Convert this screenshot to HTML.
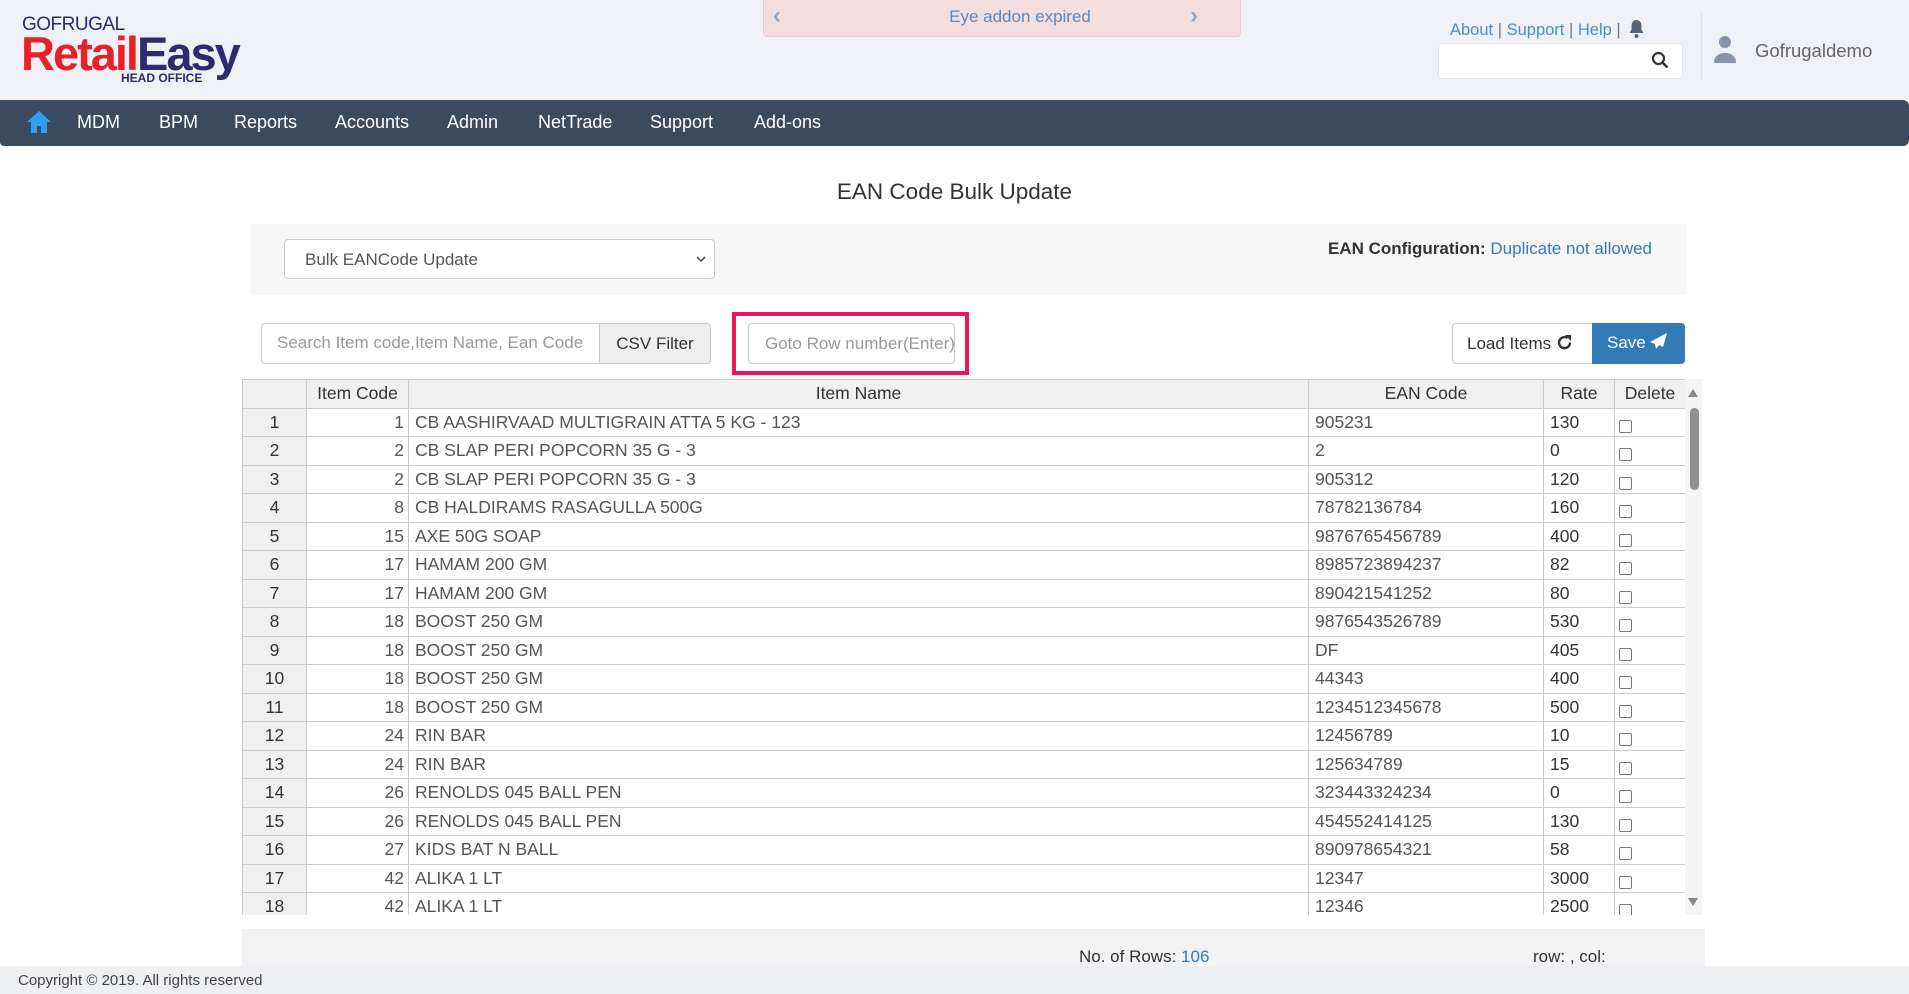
<!DOCTYPE html>
<html><head><meta charset="utf-8"><style>
*{box-sizing:border-box;margin:0;padding:0}
body{width:1909px;height:994px;position:relative;overflow:hidden;background:#fff;font-family:"Liberation Sans",Arial,sans-serif;color:#333}
.a{position:absolute}
#hdr{left:0;top:0;width:1909px;height:100px;background:#f0f1f6}
#nav{left:0;top:100px;width:1909px;height:46px;background:#3b4a5f;border-radius:0 6px 6px 4px}
#nav span{position:absolute;top:12px;color:#fff;font-size:18px;font-family:"Liberation Sans",sans-serif}
table{border-collapse:collapse;table-layout:fixed;font-size:17.5px}
td,th{border:1px solid #ccc;height:28.5px;padding:0 6px;white-space:nowrap;overflow:hidden;color:#555;font-weight:normal}
th{background:#f0f0f0;color:#333;text-align:center}
td.n{background:#f0f0f0;color:#333;text-align:center}
td.r{text-align:right;padding-right:4px;color:#555}
td.cb{padding-left:4px}
.chk{display:inline-block;width:13px;height:13px;border:1px solid #777;border-radius:2px;background:#fff;vertical-align:middle;margin-top:6px}
</style></head><body>
<div id="hdr" class="a"></div>
<div class="a" style="left:22px;top:14px;font-size:19px;color:#2d2a6e;letter-spacing:-0.5px">GOFRUGAL</div>
<div class="a" style="left:21px;top:28px;font-size:47px;font-weight:bold;letter-spacing:-2px;line-height:52px"><span style="color:#e8202a">Retail</span><span style="color:#2d2a6e">Easy</span></div>
<div class="a" style="left:121px;top:71px;font-size:12px;font-weight:bold;color:#2d2a6e">HEAD OFFICE</div>
<div class="a" style="left:763px;top:0;width:478px;height:37px;background:#f2dede;border:1px solid #ebccd1;border-top:0;border-radius:0 0 4px 4px"></div>
<div class="a" style="left:773px;top:2px;font-size:24px;font-weight:bold;color:#8aa6cc">‹</div>
<div class="a" style="left:1190px;top:2px;font-size:24px;font-weight:bold;color:#8aa6cc">›</div>
<div class="a" style="left:763px;top:7px;width:514px;text-align:center;font-size:17px;color:#5a8ac0">Eye addon expired</div>
<div class="a" style="left:1450px;top:21px;font-size:16.5px;color:#4a8ed0;white-space:nowrap">About <span style="color:#777">|</span> Support <span style="color:#777">|</span> Help <span style="color:#777">|</span></div>
<svg class="a" style="left:1628px;top:19px" width="17" height="20" viewBox="0 0 17 20"><path d="M8.5 1c-3 0-5 2.5-5 5.5v4L1.5 14h14l-2-3.5v-4c0-3-2-5.5-5-5.5z" fill="#5a6478"/><circle cx="8.5" cy="17" r="2" fill="#5a6478"/></svg>
<div class="a" style="left:1438px;top:43px;width:245px;height:36px;background:#fff;border:1px solid #e3e5ea;border-radius:4px"></div>
<svg class="a" style="left:1651px;top:51px" width="18" height="19" viewBox="0 0 18 19"><circle cx="7.5" cy="7.5" r="5.5" fill="none" stroke="#333" stroke-width="2.2"/><path d="M11.5 11.5l5 5" stroke="#333" stroke-width="2.6"/></svg>
<div class="a" style="left:1701px;top:12px;width:1px;height:68px;background:#dfe1e6"></div>
<svg class="a" style="left:1713px;top:35px" width="24" height="29" viewBox="0 0 24 29"><circle cx="12" cy="7" r="6" fill="#8a93a8"/><path d="M1 28c0-7 5-10 11-10s11 3 11 10z" fill="#8a93a8"/></svg>
<div class="a" style="left:1755px;top:40px;font-size:18.5px;color:#666">Gofrugaldemo</div>
<div id="nav" class="a">
<svg style="position:absolute;left:26px;top:10px" width="26" height="24" viewBox="0 0 26 24"><path d="M13 1L1 12h4v11h6v-7h4v7h6V12h4z" fill="#2f9fee"/></svg>
<span style="left:77px">MDM</span><span style="left:159px">BPM</span><span style="left:234px">Reports</span><span style="left:335px">Accounts</span><span style="left:447px">Admin</span><span style="left:538px">NetTrade</span><span style="left:650px">Support</span><span style="left:754px">Add-ons</span>
</div>
<div class="a" style="left:0;top:179px;width:1909px;text-align:center;font-size:22.5px;color:#333">EAN Code Bulk Update</div>
<div class="a" style="left:251px;top:224px;width:1435px;height:71px;background:#f7f7f7"></div>
<div class="a" style="left:284px;top:239px;width:431px;height:40px;background:#fff;border:1px solid #ccc;border-radius:4px;font-size:17px;color:#555;padding:10px 20px">Bulk EANCode Update<svg style="position:absolute;right:8px;top:16px" width="10" height="7" viewBox="0 0 10 7"><path d="M1 1l4 4 4-4" fill="none" stroke="#444" stroke-width="1.5"/></svg></div>
<div class="a" style="right:257px;top:239px;font-size:17px;color:#333"><b>EAN Configuration:</b> <span style="color:#337ab7">Duplicate not allowed</span></div>
<div class="a" style="left:261px;top:323px;width:450px;height:41px;border:1px solid #ccc;border-radius:4px;background:#fff"></div>
<div class="a" style="left:277px;top:333px;font-size:17px;color:#999;width:310px;overflow:hidden;white-space:nowrap">Search Item code,Item Name, Ean Code</div>
<div class="a" style="left:599px;top:323px;width:112px;height:41px;border:1px solid #ccc;border-radius:0 4px 4px 0;background:#eee;font-size:17px;color:#333;text-align:center;padding-top:10px">CSV Filter</div>
<div class="a" style="left:732px;top:312px;width:237px;height:63px;border:4px solid #ec1558"></div>
<div class="a" style="left:748px;top:323px;width:207px;height:41px;border:1px solid #ccc;border-radius:4px;background:#fff;font-size:17px;color:#999;padding:10px 16px;white-space:nowrap;overflow:hidden">Goto Row number(Enter)</div>
<div class="a" style="left:1452px;top:323px;width:141px;height:41px;border:1px solid #ccc;border-radius:4px 0 0 4px;background:#fff;font-size:17px;color:#333;padding:10px 14px;white-space:nowrap">Load Items <svg width="17" height="17" viewBox="0 0 17 17" style="vertical-align:-2px"><path d="M14 8.5A5.5 5.5 0 1 1 11.5 4" fill="none" stroke="#333" stroke-width="2.4"/><path d="M9 1h6v6z" fill="#333"/></svg></div>
<div class="a" style="left:1592px;top:323px;width:93px;height:41px;border-radius:0 4px 4px 0;background:#337ab7;font-size:17px;color:#fff;padding:10px 15px;white-space:nowrap">Save <svg width="18" height="16" viewBox="0 0 18 16" style="vertical-align:-1px"><path d="M17 0L0 9l5 2 1 5 3-4 4 2z" fill="#fff"/></svg></div>
<div class="a" style="left:242px;top:379px;width:1443px;height:536px;overflow:hidden">
<table style="width:1443px">
<colgroup><col style="width:64px"><col style="width:102px"><col style="width:900px"><col style="width:235px"><col style="width:71px"><col style="width:71px"></colgroup>
<tr><th></th><th>Item Code</th><th>Item Name</th><th>EAN Code</th><th>Rate</th><th>Delete</th></tr>
<tr><td class="n">1</td><td class="r">1</td><td>CB AASHIRVAAD MULTIGRAIN ATTA 5 KG - 123</td><td>905231</td><td style="color:#333">130</td><td class="cb"><span class="chk"></span></td></tr>
<tr><td class="n">2</td><td class="r">2</td><td>CB SLAP PERI POPCORN 35 G - 3</td><td>2</td><td style="color:#333">0</td><td class="cb"><span class="chk"></span></td></tr>
<tr><td class="n">3</td><td class="r">2</td><td>CB SLAP PERI POPCORN 35 G - 3</td><td>905312</td><td style="color:#333">120</td><td class="cb"><span class="chk"></span></td></tr>
<tr><td class="n">4</td><td class="r">8</td><td>CB HALDIRAMS RASAGULLA 500G</td><td>78782136784</td><td style="color:#333">160</td><td class="cb"><span class="chk"></span></td></tr>
<tr><td class="n">5</td><td class="r">15</td><td>AXE 50G SOAP</td><td>9876765456789</td><td style="color:#333">400</td><td class="cb"><span class="chk"></span></td></tr>
<tr><td class="n">6</td><td class="r">17</td><td>HAMAM 200 GM</td><td>8985723894237</td><td style="color:#333">82</td><td class="cb"><span class="chk"></span></td></tr>
<tr><td class="n">7</td><td class="r">17</td><td>HAMAM 200 GM</td><td>890421541252</td><td style="color:#333">80</td><td class="cb"><span class="chk"></span></td></tr>
<tr><td class="n">8</td><td class="r">18</td><td>BOOST 250 GM</td><td>9876543526789</td><td style="color:#333">530</td><td class="cb"><span class="chk"></span></td></tr>
<tr><td class="n">9</td><td class="r">18</td><td>BOOST 250 GM</td><td>DF</td><td style="color:#333">405</td><td class="cb"><span class="chk"></span></td></tr>
<tr><td class="n">10</td><td class="r">18</td><td>BOOST 250 GM</td><td>44343</td><td style="color:#333">400</td><td class="cb"><span class="chk"></span></td></tr>
<tr><td class="n">11</td><td class="r">18</td><td>BOOST 250 GM</td><td>1234512345678</td><td style="color:#333">500</td><td class="cb"><span class="chk"></span></td></tr>
<tr><td class="n">12</td><td class="r">24</td><td>RIN BAR</td><td>12456789</td><td style="color:#333">10</td><td class="cb"><span class="chk"></span></td></tr>
<tr><td class="n">13</td><td class="r">24</td><td>RIN BAR</td><td>125634789</td><td style="color:#333">15</td><td class="cb"><span class="chk"></span></td></tr>
<tr><td class="n">14</td><td class="r">26</td><td>RENOLDS 045 BALL PEN</td><td>323443324234</td><td style="color:#333">0</td><td class="cb"><span class="chk"></span></td></tr>
<tr><td class="n">15</td><td class="r">26</td><td>RENOLDS 045 BALL PEN</td><td>454552414125</td><td style="color:#333">130</td><td class="cb"><span class="chk"></span></td></tr>
<tr><td class="n">16</td><td class="r">27</td><td>KIDS BAT N BALL</td><td>890978654321</td><td style="color:#333">58</td><td class="cb"><span class="chk"></span></td></tr>
<tr><td class="n">17</td><td class="r">42</td><td>ALIKA 1 LT</td><td>12347</td><td style="color:#333">3000</td><td class="cb"><span class="chk"></span></td></tr>
<tr><td class="n">18</td><td class="r">42</td><td>ALIKA 1 LT</td><td>12346</td><td style="color:#333">2500</td><td class="cb"><span class="chk"></span></td></tr>
</table></div>
<div class="a" style="left:1685px;top:379px;width:17px;height:536px;background:#f5f5f5"></div>
<div class="a" style="left:1688px;top:389px;width:0;height:0;border-left:5.5px solid transparent;border-right:5.5px solid transparent;border-bottom:8px solid #888"></div>
<div class="a" style="left:1690px;top:408px;width:9px;height:82px;background:#909090;border-radius:5px"></div>
<div class="a" style="left:1688px;top:898px;width:0;height:0;border-left:5.5px solid transparent;border-right:5.5px solid transparent;border-top:8px solid #888"></div>
<div class="a" style="left:242px;top:929px;width:1463px;height:38px;background:#f2f2f2"></div>
<div class="a" style="left:1079px;top:947px;font-size:17px;color:#333">No. of Rows: <span style="color:#337ab7">106</span></div>
<div class="a" style="left:1533px;top:947px;font-size:17px;color:#333">row: , col:</div>
<div class="a" style="left:0;top:966px;width:1909px;height:28px;background:#eeeff3"></div>
<div class="a" style="left:18px;top:972px;font-size:15px;color:#444">Copyright © 2019. All rights reserved</div>
</body></html>
